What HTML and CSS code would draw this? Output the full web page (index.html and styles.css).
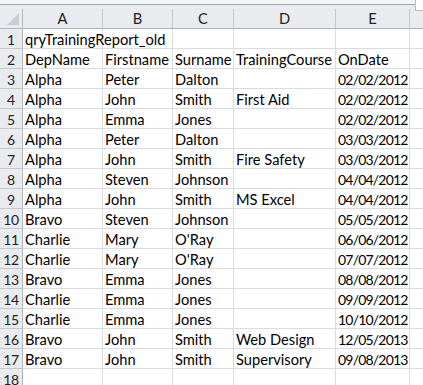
FILE: index.html
```html
<!DOCTYPE html>
<html>
<head>
<meta charset="utf-8">
<link rel="stylesheet" href="styles.css">
</head>
<body>
<div class="topbar"><div class="splitbox"></div></div>
<div class="sheet">
  <div class="corner"><div class="tri"></div></div>
  <div class="colhead">A</div><div class="colhead">B</div><div class="colhead">C</div><div class="colhead">D</div><div class="colhead">E</div><div class="colhead last"></div>

  <div class="rowhead">1</div><div class="cell overflow">qryTrainingReport_old</div><div class="cell"></div><div class="cell"></div><div class="cell"></div><div class="cell"></div><div class="cell last"></div>
  <div class="rowhead">2</div><div class="cell">DepName</div><div class="cell">Firstname</div><div class="cell">Surname</div><div class="cell">TrainingCourse</div><div class="cell">OnDate</div><div class="cell last"></div>
  <div class="rowhead">3</div><div class="cell">Alpha</div><div class="cell">Peter</div><div class="cell">Dalton</div><div class="cell"></div><div class="cell num">02/02/2012</div><div class="cell last"></div>
  <div class="rowhead">4</div><div class="cell">Alpha</div><div class="cell">John</div><div class="cell">Smith</div><div class="cell">First Aid</div><div class="cell num">02/02/2012</div><div class="cell last"></div>
  <div class="rowhead">5</div><div class="cell">Alpha</div><div class="cell">Emma</div><div class="cell">Jones</div><div class="cell"></div><div class="cell num">02/02/2012</div><div class="cell last"></div>
  <div class="rowhead">6</div><div class="cell">Alpha</div><div class="cell">Peter</div><div class="cell">Dalton</div><div class="cell"></div><div class="cell num">03/03/2012</div><div class="cell last"></div>
  <div class="rowhead">7</div><div class="cell">Alpha</div><div class="cell">John</div><div class="cell">Smith</div><div class="cell">Fire Safety</div><div class="cell num">03/03/2012</div><div class="cell last"></div>
  <div class="rowhead">8</div><div class="cell">Alpha</div><div class="cell">Steven</div><div class="cell">Johnson</div><div class="cell"></div><div class="cell num">04/04/2012</div><div class="cell last"></div>
  <div class="rowhead">9</div><div class="cell">Alpha</div><div class="cell">John</div><div class="cell">Smith</div><div class="cell">MS Excel</div><div class="cell num">04/04/2012</div><div class="cell last"></div>
  <div class="rowhead">10</div><div class="cell">Bravo</div><div class="cell">Steven</div><div class="cell">Johnson</div><div class="cell"></div><div class="cell num">05/05/2012</div><div class="cell last"></div>
  <div class="rowhead">11</div><div class="cell">Charlie</div><div class="cell">Mary</div><div class="cell">O'Ray</div><div class="cell"></div><div class="cell num">06/06/2012</div><div class="cell last"></div>
  <div class="rowhead">12</div><div class="cell">Charlie</div><div class="cell">Mary</div><div class="cell">O'Ray</div><div class="cell"></div><div class="cell num">07/07/2012</div><div class="cell last"></div>
  <div class="rowhead">13</div><div class="cell">Bravo</div><div class="cell">Emma</div><div class="cell">Jones</div><div class="cell"></div><div class="cell num">08/08/2012</div><div class="cell last"></div>
  <div class="rowhead">14</div><div class="cell">Charlie</div><div class="cell">Emma</div><div class="cell">Jones</div><div class="cell"></div><div class="cell num">09/09/2012</div><div class="cell last"></div>
  <div class="rowhead">15</div><div class="cell">Charlie</div><div class="cell">Emma</div><div class="cell">Jones</div><div class="cell"></div><div class="cell num">10/10/2012</div><div class="cell last"></div>
  <div class="rowhead">16</div><div class="cell">Bravo</div><div class="cell">John</div><div class="cell">Smith</div><div class="cell">Web Design</div><div class="cell num">12/05/2013</div><div class="cell last"></div>
  <div class="rowhead">17</div><div class="cell">Bravo</div><div class="cell">John</div><div class="cell">Smith</div><div class="cell">Supervisory</div><div class="cell num">09/08/2013</div><div class="cell last"></div>
  <div class="rowhead">18</div><div class="cell"></div><div class="cell"></div><div class="cell"></div><div class="cell"></div><div class="cell"></div><div class="cell last"></div>
</div>
</body>
</html>
```

FILE: styles.css
```css
html, body {
  margin: 0;
  padding: 0;
  background: #ffffff;
  overflow: hidden;
  width: 423px;
  height: 385px;
}
body {
  font-family: Lato, "Liberation Sans", sans-serif;
  font-size: 14.67px;
  color: #000;
}
.topbar {
  position: relative;
  height: 9px;
  box-sizing: border-box;
  background: #e9ebee;
  border-top: 4px solid #f3f4f6;
}
.topbar::before {
  content: "";
  display: block;
  height: 1px;
  background: #a3a9b0;
}
.splitbox {
  position: absolute;
  right: 0;
  top: -4px;
  width: 7px;
  height: 10px;
  background: #fff;
  border-left: 1px solid #b7bcc2;
  border-bottom: 1px solid #b7bcc2;
}
.sheet {
  display: grid;
  grid-template-columns: 23px 80px 70px 61px 102px 74px 1fr;
  grid-auto-rows: 20px;
}
.sheet > div {
  box-sizing: border-box;
  border-right: 1px solid #dadcdd;
  border-bottom: 1px solid #dadcdd;
  white-space: nowrap;
}
.sheet > .corner,
.sheet > .colhead,
.sheet > .rowhead {
  background: #e9ebee;
  color: #222;
}
.sheet > .corner {
  position: relative;
  border-right: 1px solid #b1b6bc;
  border-bottom: 1px solid #b1b6bc;
}
.tri {
  position: absolute;
  right: 3px;
  bottom: 3px;
  width: 0;
  height: 0;
  border-left: 12px solid transparent;
  border-bottom: 12px solid #c9cdd1;
}
.sheet > .colhead {
  border-right: 1px solid #c3c7cc;
  border-bottom: 1px solid #b1b6bc;
  text-align: center;
  line-height: 19px;
}
.sheet > .rowhead {
  border-right: 1px solid #b1b6bc;
  border-bottom: 1px solid #c3c7cc;
  text-align: center;
  font-size: 14px;
  letter-spacing: -0.3px;
  line-height: 20px;
  padding-top: 1px;
}
.sheet > .cell {
  padding: 1px 2px 0;
  line-height: 20px;
  overflow: hidden;
}
.sheet > .cell.overflow {
  overflow: visible;
  position: relative;
  z-index: 1;
}
.sheet > .cell.num {
  text-align: right;
  font-size: 14px;
  letter-spacing: -0.8px;
  padding-right: 2px;
}
.sheet > .last {
  border-right: none;
}
```
